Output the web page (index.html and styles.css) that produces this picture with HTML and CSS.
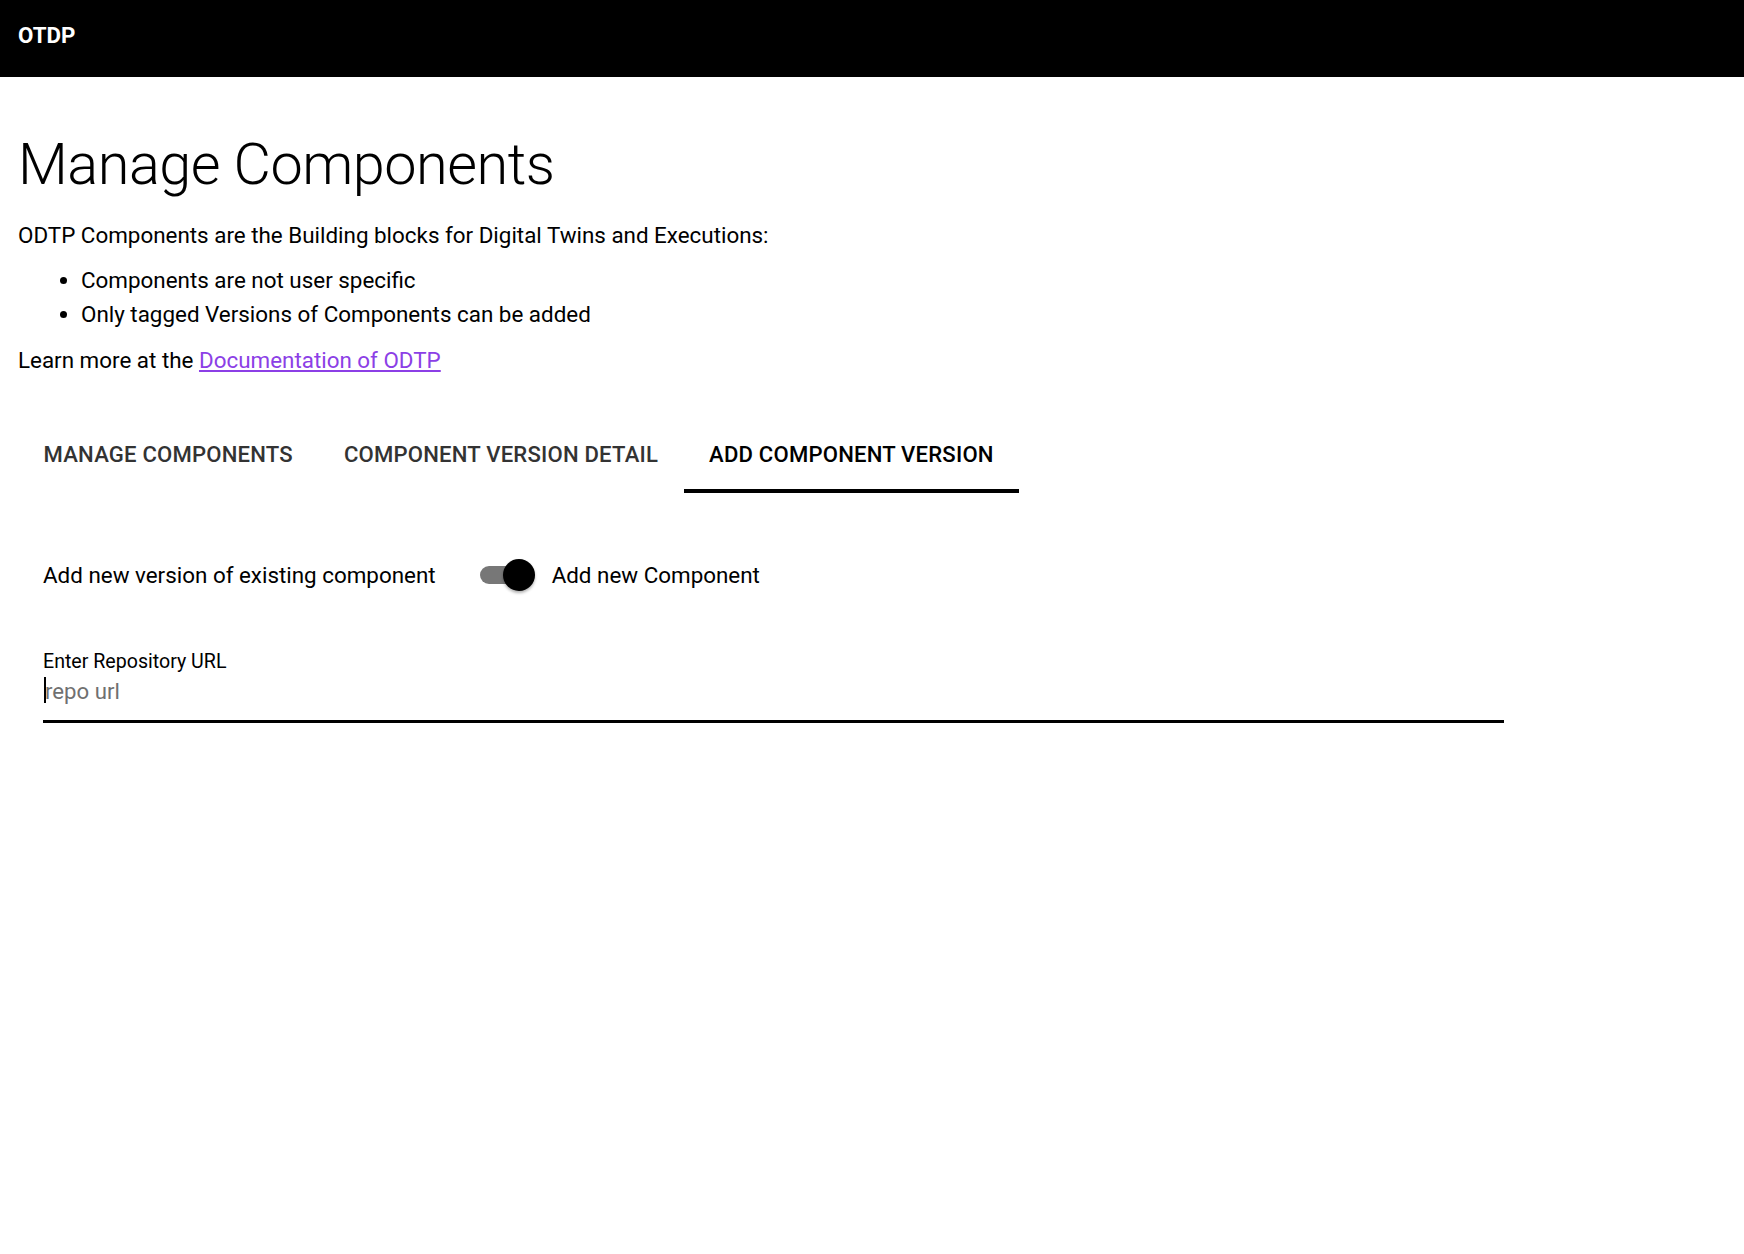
FILE: index.html
```html
<!DOCTYPE html>
<html lang="en">
<head>
<meta charset="utf-8">
<title>OTDP - Manage Components</title>
<link rel="stylesheet" href="styles.css">
</head>
<body>
<header class="topbar"><span class="brand">OTDP</span></header>
<main class="page">
  <h1 class="title">Manage Components</h1>
  <p class="lead">ODTP Components are the Building blocks for Digital Twins and Executions:</p>
  <ul class="notes">
    <li>Components are not user specific</li>
    <li>Only tagged Versions of Components can be added</li>
  </ul>
  <p class="more">Learn more at the <a class="doc-link" href="#">Documentation of ODTP</a></p>
  <nav class="tabs">
    <div class="tab">MANAGE COMPONENTS</div>
    <div class="tab">COMPONENT VERSION DETAIL</div>
    <div class="tab tab-active">ADD COMPONENT VERSION</div>
  </nav>
  <section class="panel">
    <div class="toggle-row">
      <span class="toggle-label">Add new version of existing component</span>
      <span class="switch"><span class="track"></span><span class="thumb"></span></span>
      <span class="toggle-label">Add new Component</span>
    </div>
    <label class="field">
      <span class="field-label">Enter Repository URL</span>
      <span class="field-control">
        <span class="caret"></span>
        <input class="field-input" type="text" placeholder="repo url">
      </span>
    </label>
  </section>
</main>
</body>
</html>
```
FILE: styles.css
```css
html, body {
  margin: 0;
  padding: 0;
  background: #fff;
  font-family: Roboto, "Liberation Sans", sans-serif;
  color: #000;
}

.topbar {
  height: 77px;
  box-sizing: border-box;
  background: #000;
  padding: 22px 18px 0;
}

.brand {
  display: block;
  color: #fff;
  font-weight: 700;
  font-size: 22.3px;
  line-height: 26px;
}

.page {
  padding: 0 18px;
}

.title {
  margin: 53px 0 21px;
  font-size: 57.6px;
  font-weight: 300;
  line-height: 70px;
  letter-spacing: -0.5px;
}

.lead {
  margin: 0 0 14.6px;
  font-size: 22.4px;
  line-height: 28.8px;
}

.notes {
  margin: 0 0 14.5px;
  padding-left: 63px;
  font-size: 22.4px;
  line-height: 33.4px;
}

.more {
  margin: 0;
  font-size: 22.4px;
  line-height: 28.8px;
}

.doc-link {
  color: #8c3fe6;
  text-decoration: underline;
}

.tabs {
  display: flex;
  margin-top: 45.5px;
}

.tab {
  padding: 21px 25.5px 22px;
  font-size: 22.1px;
  font-weight: 500;
  line-height: 26px;
  letter-spacing: 0.2px;
  color: #333;
  border-bottom: 4px solid transparent;
}

.tab-active {
  color: #000;
  border-bottom-color: #000;
}

.panel {
  padding-left: 25px;
}

.toggle-row {
  display: flex;
  align-items: center;
  height: 40px;
  margin-top: 62px;
  font-size: 22.4px;
  line-height: 26px;
}

.switch {
  position: relative;
  width: 56px;
  height: 32px;
  margin: 0 16px 0 44px;
}

.track {
  position: absolute;
  left: 0;
  top: 7px;
  width: 52px;
  height: 18px;
  border-radius: 9px;
  background: #777;
}

.thumb {
  position: absolute;
  left: 23px;
  top: 0;
  width: 32px;
  height: 32px;
  border-radius: 50%;
  background: #000;
  box-shadow: 0 2px 3px rgba(0, 0, 0, 0.3);
}

.field {
  display: block;
  width: 1461px;
  margin-top: 55px;
}

.field-label {
  display: block;
  font-size: 19.6px;
  line-height: 24px;
}

.field-control {
  position: relative;
  display: block;
  padding-bottom: 12px;
  border-bottom: 3px solid #000;
}

.caret {
  position: absolute;
  left: 1px;
  top: 3px;
  width: 1.5px;
  height: 26px;
  background: #000;
}

.field-input {
  display: block;
  width: 100%;
  height: 34px;
  margin: 0;
  padding: 0 0 0 2px;
  border: none;
  outline: none;
  background: transparent;
  font-family: Roboto, "Liberation Sans", sans-serif;
  font-size: 22.2px;
  color: #000;
}

.field-input::placeholder {
  color: #707070;
  opacity: 1;
}
```
